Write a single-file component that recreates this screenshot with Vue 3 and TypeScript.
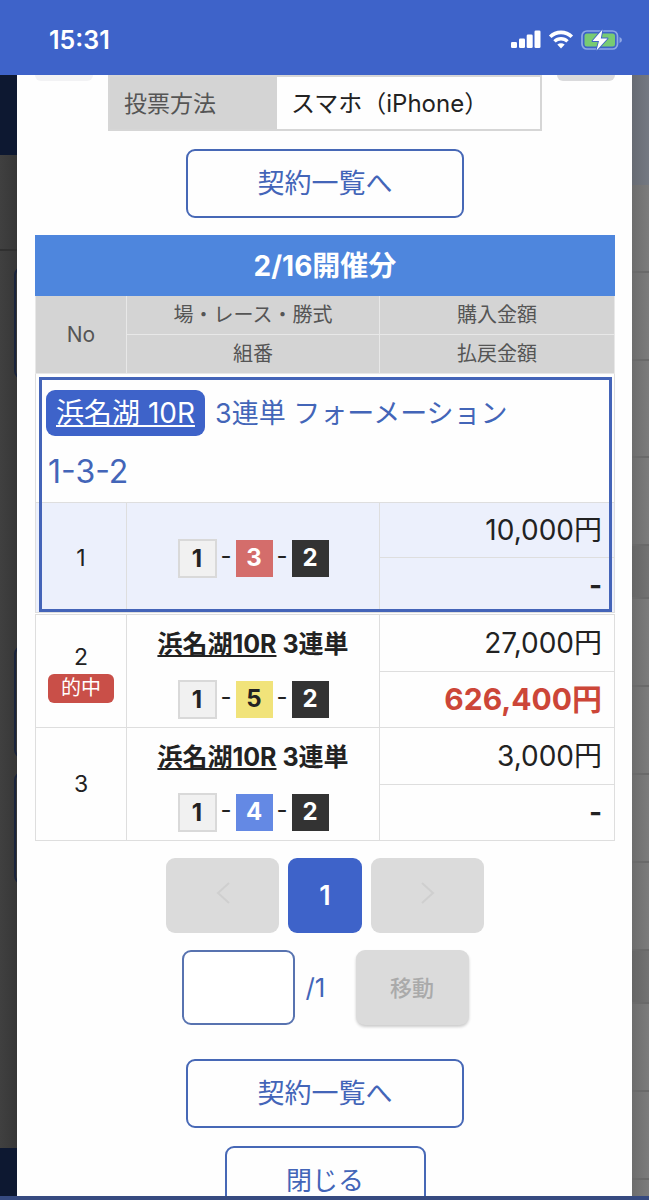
<script setup lang="ts">
import { ref } from 'vue'

interface Boat {
  no: number
}

interface Bet {
  no: number
  race?: string
  type?: string
  boats: Boat[]
  amount: string
  payout: string
  hit: boolean
  featured: boolean
}

const toBoats = (...numbers: number[]): Boat[] => numbers.map((no) => ({ no }))

const bets: Bet[] = [
  { no: 1, boats: toBoats(1, 3, 2), amount: '10,000円', payout: '-', hit: false, featured: true },
  { no: 2, race: '浜名湖10R', type: '3連単', boats: toBoats(1, 5, 2), amount: '27,000円', payout: '626,400円', hit: true, featured: false },
  { no: 3, race: '浜名湖10R', type: '3連単', boats: toBoats(1, 4, 2), amount: '3,000円', payout: '-', hit: false, featured: false },
]

const page = ref('')
</script>

<template>
  <div class="screen">
    <header class="status">
      <span class="clock">15:31</span>
      <span class="indicators">
        <svg width="30" height="20" viewBox="0 0 30 20" fill="#fff" aria-hidden="true">
          <rect x="0" y="12" width="6" height="6" rx="1.3" />
          <rect x="8" y="8.500" width="6" height="9.500" rx="1.300" />
          <rect x="15.700" y="4.500" width="6" height="13.500" rx="1.300" />
          <rect x="23.500" y="0.500" width="6" height="17.500" rx="1.300" />
        </svg>
        <svg width="26" height="20" viewBox="0 0 26 20" aria-hidden="true">
          <path d="M2.200 6.800 A15.300 15.300 0 0 1 23.800 6.800" fill="none" stroke="#fff" stroke-width="3.600" />
          <path d="M6.500 11.400 A9.200 9.200 0 0 1 19.500 11.400" fill="none" stroke="#fff" stroke-width="3.400" />
          <path d="M9.300 14.600 Q13 11.800 16.700 14.600 L13 18.600Z" fill="#fff" />
        </svg>
        <svg width="42" height="22" viewBox="0 0 42 22" aria-hidden="true">
          <rect x="1" y="2" width="35.500" height="18" rx="5" fill="none" stroke="#8fa8e6" stroke-width="1.700" />
          <rect x="3.500" y="4.500" width="30.500" height="13" rx="2.500" fill="#78cb72" />
          <path d="M38.500 8 Q41 9 41 11 Q41 13 38.500 14Z" fill="#8fa8e6" />
          <path d="M21.500 0.500 L11.500 12 H18 L15.500 21.500 L26.500 9.500 H19.800Z" fill="#fff" stroke="#3f64c9" stroke-width="1.800" paint-order="stroke" stroke-linejoin="round" />
        </svg>
      </span>
    </header>

    <div class="body">
      <div class="backdrop left" aria-hidden="true">
        <div class="navy top"></div>
        <div class="strip"></div>
        <div class="card first"></div>
        <div class="card second"></div>
        <div class="card third"></div>
        <div class="navy foot"></div>
      </div>

      <main class="modal">
        <div class="upper">
          <span class="stub pale"></span>
          <table class="info">
            <tbody>
              <tr>
                <th scope="row">投票方法</th>
                <td>スマホ（iPhone）</td>
              </tr>
            </tbody>
          </table>
          <span class="stub"></span>
        </div>

        <button type="button" class="outline">契約一覧へ</button>

        <table class="bets">
          <colgroup>
            <col class="c-no" />
            <col />
            <col class="c-sum" />
          </colgroup>
          <thead>
            <tr class="title"><th colspan="3">2/16開催分</th></tr>
            <tr class="labels">
              <th rowspan="2" class="no-label">No</th>
              <th>場・レース・勝式</th>
              <th>購入金額</th>
            </tr>
            <tr class="labels">
              <th>組番</th>
              <th>払戻金額</th>
            </tr>
          </thead>
          <tbody v-for="bet in bets" :key="bet.no" :class="{ featured: bet.featured }">
            <tr v-if="bet.featured">
              <td colspan="3" class="formation">
                <p><a href="#race" class="race-tag">浜名湖 10R</a>3連単 フォーメーション</p>
                <p class="combo">1-3-2</p>
              </td>
            </tr>
            <tr class="amount-row">
              <td rowspan="2" class="no">
                {{ bet.no }}
                <span v-if="bet.hit" class="hit">的中</span>
              </td>
              <td rowspan="2" class="pick">
                <p v-if="bet.race" class="race"><a href="#race">{{ bet.race }}</a> {{ bet.type }}</p>
                <div class="boats">
                  <template v-for="(boat, i) in bet.boats" :key="boat.no">
                    <span v-if="i > 0" class="dash">-</span>
                    <span class="boat" :class="'b' + boat.no">{{ boat.no }}</span>
                  </template>
                </div>
              </td>
              <td class="sum">{{ bet.amount }}</td>
            </tr>
            <tr class="payout-row">
              <td class="sum payout" :class="{ won: bet.hit }">{{ bet.payout }}</td>
            </tr>
          </tbody>
        </table>

        <nav class="pager" aria-label="ページ">
          <button type="button" class="step" disabled aria-label="前へ">
            <svg width="14" height="24" viewBox="0 0 14 24"><path d="M13 2 L2 12 L13 22" /></svg>
          </button>
          <button type="button" class="current">1</button>
          <button type="button" class="step" disabled aria-label="次へ">
            <svg width="14" height="24" viewBox="0 0 14 24"><path d="M1 2 L12 12 L1 22" /></svg>
          </button>
        </nav>

        <form class="jump" @submit.prevent>
          <input id="page" v-model="page" type="text" inputmode="numeric" />
          <label for="page">/1</label>
          <button type="submit" disabled>移動</button>
        </form>

        <button type="button" class="outline">契約一覧へ</button>
        <button type="button" class="outline close">閉じる</button>
      </main>

      <div class="backdrop right" aria-hidden="true">
        <div class="slate"></div>
        <div class="line"></div>
        <div class="line"></div>
        <div class="line tall"></div>
        <div class="line"></div>
        <div class="line head"></div>
        <div class="line"></div>
        <div class="line"></div>
        <div class="line"></div>
        <div class="line"></div>
        <div class="line head"></div>
        <div class="line"></div>
        <div class="line"></div>
      </div>
    </div>
    <div class="base"></div>
  </div>
</template>

<style>
body {
  margin: 0;
}
</style>

<style scoped>
* {
  box-sizing: border-box;
}

.screen {
  display: flex;
  flex-direction: column;
  height: 100vh;
  overflow: hidden;
  background: #fefefe;
  color: #222;
  font-family: Inter, "Noto Sans CJK JP", sans-serif;
  font-size: 24px;
}

button,
input {
  font: inherit;
}

p {
  margin: 0;
}

.status {
  flex: none;
  display: flex;
  align-items: center;
  justify-content: space-between;
  height: 75px;
  padding: 4px 26px 0 49px;
  background: #3e63c9;
  color: #fff;
}

.clock {
  font-size: 25px;
  font-weight: 600;
}

.indicators {
  display: flex;
  align-items: center;
  gap: 7px;
}

.body {
  flex: 1;
  display: flex;
  min-height: 0;
}

.base {
  flex: none;
  height: 4px;
  background: #364a80;
}

.backdrop {
  flex: none;
  display: flex;
  flex-direction: column;
  width: 17px;
  overflow: hidden;
}

.left {
  background: linear-gradient(to right, #404040, #373737);
}

.navy {
  flex: none;
  background: #0d1831;
}

.navy.top {
  height: 80px;
}

.navy.foot {
  height: 48px;
  margin-top: auto;
}

.strip {
  height: 96px;
  border-bottom: 2px solid #303030;
}

.card {
  flex: none;
  width: 24px;
  height: 112px;
  margin-left: 14px;
  border: 2px solid #1a243c;
  border-radius: 8px;
}

.card.first {
  margin-top: 16px;
}

.card.second {
  margin-top: 267px;
}

.card.third {
  margin-top: 14px;
}

.right {
  background: linear-gradient(to right, #6d6d6d, #7c7c7c);
}

.slate {
  flex: none;
  height: 110px;
  background: linear-gradient(to right, #676b73, #747982);
}

.line {
  flex: none;
  height: 88px;
  border-bottom: 2px solid #6a6a6a;
}

.line.tall {
  height: 97px;
}

.line.head {
  height: 53px;
  background: rgba(0, 0, 0, 0.07);
}

.modal {
  flex: 1;
  display: flex;
  flex-direction: column;
  align-items: center;
  min-width: 0;
  padding: 0 17px 0 18px;
  overflow: hidden;
}

.modal > * {
  flex: none;
}

.upper {
  display: flex;
  align-items: flex-start;
  justify-content: space-between;
  width: 100%;
}

.stub {
  width: 58px;
  height: 6px;
  border-radius: 0 0 8px 8px;
  background: #dadadc;
}

.stub.pale {
  background: #f2f2f4;
}

.info {
  width: 434px;
  height: 56px;
  border-collapse: collapse;
  border: 2px solid #d6d6d6;
}

.info th,
.info td {
  padding: 2px 14px 0;
  text-align: left;
  line-height: 32px;
}

.info th {
  width: 168px;
  background: #d4d4d4;
  color: #555;
  font-size: 23px;
  font-weight: 400;
}

.outline {
  width: 278px;
  height: 69px;
  margin-top: 18px;
  padding: 0;
  border: 2px solid #4768b6;
  border-radius: 9px;
  background: #fefefe;
  color: #4365b8;
  font-size: 27px;
  line-height: 30px;
}

.bets {
  width: 100%;
  margin-top: 17px;
  border-collapse: collapse;
  table-layout: fixed;
}

.c-no {
  width: 91px;
}

.c-sum {
  width: 235px;
}

.bets th,
.bets td {
  padding: 0;
  border: 1px solid #dedede;
}

.bets .title th {
  height: 60px;
  border-color: #4e86dd;
  background: #4e86dd;
  color: #fff;
  font-size: 28px;
  font-weight: 700;
  line-height: 40px;
}

.bets .labels th {
  height: 39px;
  border-color: #e8e8e8;
  background: #d4d4d4;
  color: #555;
  font-size: 20px;
  font-weight: 400;
  line-height: 28px;
}

.bets .labels .no-label {
  font-size: 21px;
}

.featured {
  position: relative;
}

.featured::after {
  content: "";
  position: absolute;
  inset: 3px;
  border: 3px solid #4464b8;
  pointer-events: none;
}

.bets .formation {
  height: 129px;
  padding: 10px 10px 0;
  color: #4365b8;
  font-size: 27px;
  line-height: 58px;
}

.race-tag {
  display: inline-block;
  height: 46px;
  margin-right: 10px;
  padding: 0 10px;
  border-radius: 9px;
  background: #3e63c9;
  color: #fff;
  font-size: 28px;
  line-height: 46px;
}

.combo {
  padding-left: 2px;
  font-size: 32px;
}

.featured .amount-row,
.featured .payout-row {
  background: #ecf0fc;
}

.no {
  text-align: center;
  font-size: 23px;
  line-height: 34px;
}

.hit {
  display: block;
  width: 66px;
  margin: 0 auto;
  border-radius: 6px;
  background: #c94f48;
  color: #fff;
  font-size: 20px;
  line-height: 29px;
}

.bets .pick {
  padding: 9px 0 8px;
  text-align: center;
}

.race {
  margin-bottom: 16px;
  font-size: 25px;
  font-weight: 700;
  line-height: 40px;
}

.race a {
  color: inherit;
}

.boats {
  display: flex;
  align-items: center;
  justify-content: center;
  height: 39px;
}

.dash {
  width: 19px;
  padding-bottom: 6px;
  text-align: center;
}

.boat {
  width: 37px;
  height: 37px;
  font-weight: 700;
  line-height: 36px;
}

.b1 {
  width: 39px;
  height: 39px;
  border: 2px solid #d9d9d9;
  background: #f1f1f1;
}

.b2 {
  background: #333;
  color: #fff;
}

.b3 {
  background: #d46d6b;
  color: #fff;
}

.b4 {
  background: #6489e4;
  color: #fff;
}

.b5 {
  background: #f1e37a;
}

.bets .sum {
  height: 56px;
  padding-right: 12px;
  font-size: 28px;
  line-height: 36px;
  text-align: right;
}

.bets .payout {
  font-weight: 700;
}

.bets .featured .sum {
  height: 55px;
}

.bets .won {
  color: #cc4638;
  font-size: 30px;
}

.pager {
  display: flex;
  gap: 9px;
  margin-top: 18px;
}

.pager button {
  width: 113px;
  height: 75px;
  padding: 0;
  border: 0;
  border-radius: 9px;
  background: #dbdbdb;
}

.pager .current {
  width: 74px;
  background: #3e63c9;
  color: #fff;
  font-size: 27px;
  font-weight: 600;
}

.step path {
  fill: none;
  stroke: #cfcfcf;
  stroke-width: 2;
}

.jump {
  display: flex;
  align-items: center;
  margin-top: 17px;
  color: #4365b8;
}

.jump input {
  width: 113px;
  height: 75px;
  padding: 0 12px;
  border: 2px solid #5873b0;
  border-radius: 9px;
  background: #fff;
}

.jump label {
  width: 61px;
  padding-left: 11px;
  font-size: 26px;
}

.jump button {
  width: 113px;
  height: 75px;
  padding: 0 0 4px;
  border: 0;
  border-radius: 9px;
  background: #dbdbdb;
  box-shadow: 0 2px 3px rgba(0, 0, 0, 0.2);
  color: #aaa;
  font-size: 22px;
  font-weight: 500;
}

.jump + .outline {
  margin-top: 34px;
}

.close {
  width: 201px;
  font-size: 26px;
}
</style>
